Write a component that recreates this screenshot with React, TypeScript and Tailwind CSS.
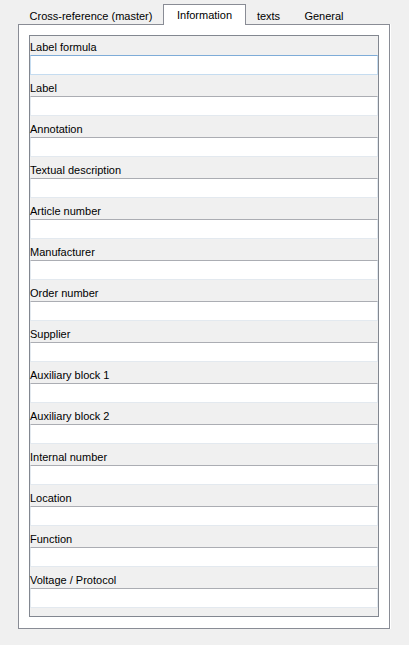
import React from "react";

const fields = [
  "Label formula",
  "Label",
  "Annotation",
  "Textual description",
  "Article number",
  "Manufacturer",
  "Order number",
  "Supplier",
  "Auxiliary block 1",
  "Auxiliary block 2",
  "Internal number",
  "Location",
  "Function",
  "Voltage / Protocol",
];

export default function App() {
  return (
    <div
      className="w-[409px] h-[645px] bg-[#f0f0f0] text-[11px] text-black relative"
      style={{ fontFamily: '"Liberation Sans", Arial, sans-serif' }}
    >
      <div className="pt-[4px] pl-[19px] flex h-[25px] relative z-10">
        <div className="w-[144px] h-[20px] mt-[1px] pt-[2px] flex items-center justify-center leading-none">
          Cross-reference (master)
        </div>
        <div className="w-[83px] h-[21px] pt-[1px] bg-white border border-b-0 border-[#898c95] flex items-center justify-center leading-none">
          Information
        </div>
        <div className="w-[45px] h-[20px] mt-[1px] pt-[2px] flex items-center justify-center leading-none">
          texts
        </div>
        <div className="w-[66px] h-[20px] mt-[1px] pt-[2px] flex items-center justify-center leading-none">
          General
        </div>
      </div>
      <div className="ml-[18px] -mt-[1px] w-[372px] h-[605px] bg-white border border-[#898c95] shadow-[1px_0_0_#ffffff] pt-[10px] px-[10px]">
        <div className="w-[350px] h-[582px] border border-[#828790] bg-[#f0f0f0] pb-[6px]">
          {fields.map((f) => (
            <div key={f} className="mb-[2px]">
              <div className="h-[19px] flex items-end leading-[14px] pb-[1px]">
                {f}
              </div>
              <div
                className={
                  f === "Label formula"
                    ? "h-[20px] bg-white border border-[#c5dcf0] border-t-[#7eacd8]"
                    : "h-[20px] bg-white border border-[#e3e9ef] border-t-[#abadb3]"
                }
              />
            </div>
          ))}
        </div>
      </div>
    </div>
  );
}
